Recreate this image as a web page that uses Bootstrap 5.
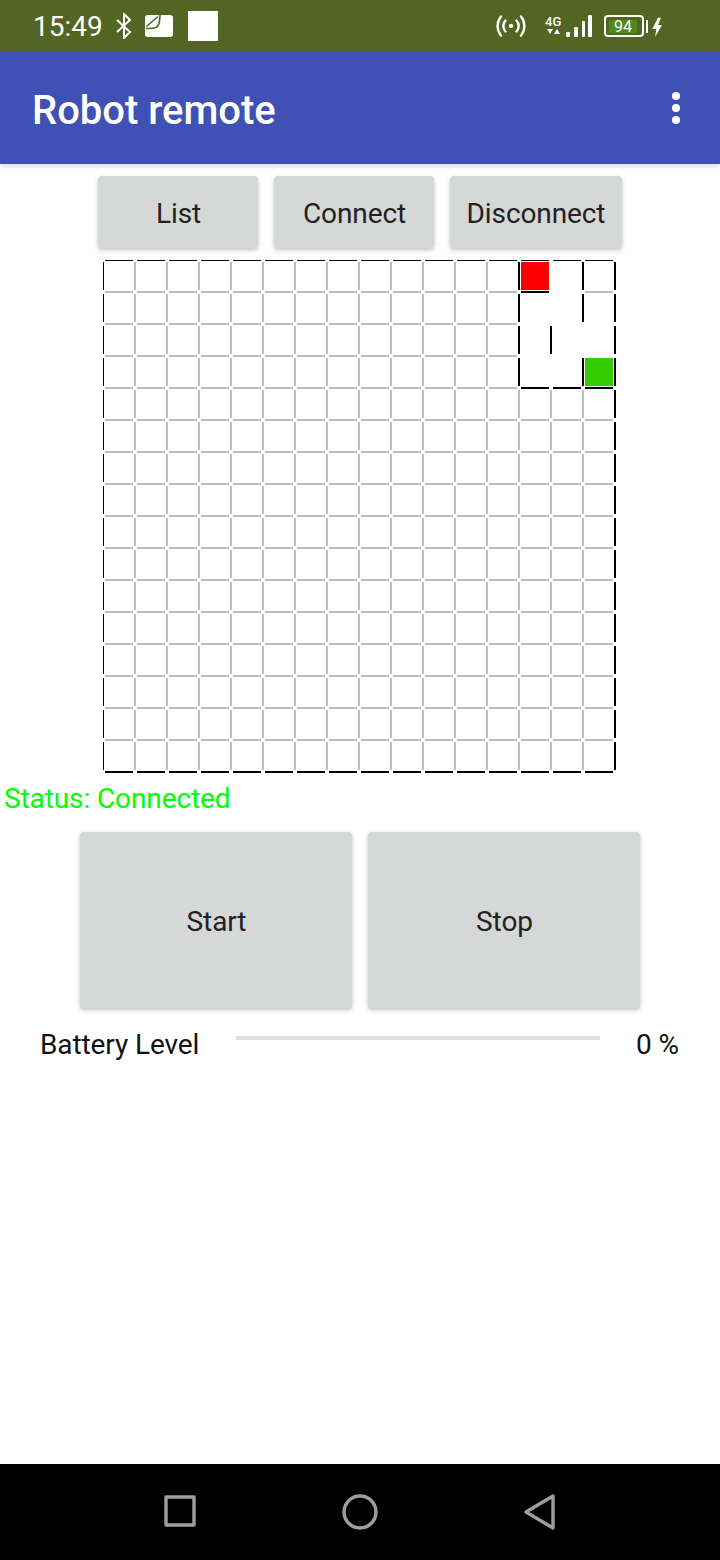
<!DOCTYPE html>
<html lang="en">
<head>
  <meta charset="UTF-8">
  <title>Robot remote</title>
  <meta name="viewport" content="width=device-width, initial-scale=1">
  <link href="https://cdn.jsdelivr.net/npm/bootstrap@5.3.2/dist/css/bootstrap.min.css" rel="stylesheet">
  <style>
    body { font-family: Roboto, "Liberation Sans", sans-serif; background: #fff; margin: 0; }
    .phone { width: 720px; height: 1560px; }
    .status-strip { height: 52px; background: #536523; color: #fff; padding-left: 33px; padding-right: 57px; }
    .clock { font-size: 28px; line-height: 52px; width: 83px; padding-top: 2px; }
    .sim-icon { margin-left: 13px; }
    .note-square { width: 30px; height: 30px; background: #fff; margin-left: 15px; }
    .net-box { margin-left: 19px; margin-right: 5px; width: 16px; }
    .net-label { font-size: 13px; line-height: 12px; font-weight: 500; text-align: center; }
    .batt { width: 40px; height: 22px; border: 2px solid #fff; border-radius: 4px; padding: 3px 5px 2px 3px; margin-left: 12px; }
    .batt-fill { background: #4c8a1e; font-size: 16px; line-height: 13px; text-align: center; height: 13px; }
    .app-bar { height: 112px; background: #3f51b5; color: #fff; padding-left: 32px; padding-right: 40px; box-shadow: 0 2px 5px rgba(0,0,0,.15); }
    .app-title { font-size: 40px; font-weight: 500; padding-top: 5px; }
    .dots i { display: block; width: 8px; height: 8px; background: #fff; border-radius: 50%; margin: 4px 0; }
    .action-btn { background: #d6d7d7; border: 0; border-radius: 4px; color: #222; font-size: 28px; line-height: 32px; padding: 3px 0 0 1px;
      letter-spacing: -.1px; box-shadow: 0 2px 4px rgba(0,0,0,.25); }
    .action-btn:hover { background: #d6d7d7; color: #222; }
    .top-row { padding-top: 12px; height: 84px; }
    .top-row .action-btn { height: 72px; width: 160px; }
    .top-row .wide-btn { width: 172px; padding-left: 0; }
    .maze-wrap { height: 514px; margin-top: 12px; margin-bottom: 0; }
    .state-text { color: #00ff00; font-size: 28px; line-height: 32px; padding-left: 4px; margin-top: 9px; letter-spacing: -.1px; }
    .big-row { margin-top: 17px; }
    .big-row .action-btn { width: 272px; height: 176px; }
    .batt-row { padding: 20px 41px 0 40px; font-size: 28px; line-height: 34px; color: #111; letter-spacing: -.1px; }
    .batt-name { width: 196px; }
    .batt-track { width: 364px; height: 4px; background: #e0e0e0; margin-top: -15px; }
    .batt-value { width: 79px; text-align: right; }
    .nav-strip { height: 96px; background: #000; }
  </style>
</head>
<body>
  <div class="phone d-flex flex-column overflow-hidden">

    <!-- status bar -->
    <div class="status-strip d-flex align-items-center flex-shrink-0">
      <div class="clock">15:49</div>
      <svg width="16" height="26" viewBox="0 0 16 26" fill="none" stroke="#fff" stroke-width="2"><path d="M1 7l13 12-6 6V1l6 6L1 19"/></svg>
      <svg class="sim-icon" width="28" height="22" viewBox="0 0 28 22"><rect width="28" height="22" rx="3" fill="#fff"/><path fill="none" stroke="#536523" stroke-width="1.6" d="M1.500 11.500L13 1.500M15 0c0 7-2 11.500-4 12.500-2 .7-5 1-10 1"/></svg>
      <div class="note-square"></div>
      <div class="flex-grow-1"></div>
      <svg width="30" height="24" viewBox="0 0 30 24" fill="none" stroke="#fff" stroke-width="2.4" stroke-linecap="round"><circle cx="15" cy="12" r="2.2" fill="#fff" stroke="none"/><path d="M9.5 6.5a8 8 0 0 0 0 11M20.5 6.500a8 8 0 0 1 0 11M5 2.500a15 15 0 0 0 0 19M25 2.500a15 15 0 0 1 0 19"/></svg>
      <div class="net-box">
        <div class="net-label">4G</div>
        <svg class="d-block" width="16" height="8" viewBox="0 0 16 8"><path fill="#fff" d="M2 1h6L5 6zM9 6h6l-3-5z"/></svg>
      </div>
      <svg width="26" height="24" viewBox="0 0 26 24" fill="#fff"><rect x="0" y="18" width="4" height="5" rx="1"/><rect x="8" y="13" width="4" height="10" rx="1"/><rect x="16" y="7" width="3" height="16" rx="1"/><rect x="22" y="1" width="4" height="22" rx="1"/></svg>
      <div class="batt flex-shrink-0"><div class="batt-fill">94</div></div>
      <svg width="19" height="22" viewBox="0 0 19 22" fill="#fff"><rect x="2" y="5" width="2" height="13"/><path d="M14 2.700h3L14 10h4L11 22l1.300-8H8.300z"/></svg>
    </div>

    <!-- app bar -->
    <div class="app-bar d-flex align-items-center justify-content-between flex-shrink-0">
      <div class="app-title">Robot remote</div>
      <div class="dots"><i></i><i></i><i></i></div>
    </div>

    <!-- list / connect / disconnect -->
    <div class="top-row d-flex justify-content-center gap-3 flex-shrink-0">
      <button class="btn action-btn">List</button>
      <button class="btn action-btn">Connect</button>
      <button class="btn action-btn wide-btn">Disconnect</button>
    </div>

    <!-- maze -->
    <div class="maze-wrap d-flex justify-content-center flex-shrink-0">
      <svg id="maze" width="514" height="514" viewBox="0 0 514 514"></svg>
    </div>

    <div class="state-text">Status: Connected</div>

    <div class="big-row d-flex justify-content-center gap-3 flex-shrink-0">
      <button class="btn action-btn">Start</button>
      <button class="btn action-btn">Stop</button>
    </div>

    <div class="batt-row d-flex align-items-center flex-shrink-0">
      <div class="batt-name">Battery Level</div>
      <div class="batt-track"></div>
      <div class="batt-value">0 %</div>
    </div>

    <div class="flex-grow-1"></div>

    <!-- navigation bar -->
    <div class="nav-strip d-flex align-items-center justify-content-center flex-shrink-0">
      <svg width="440" height="96" viewBox="0 0 440 96" fill="none" stroke="#9e9e9e" stroke-width="3.4" stroke-linejoin="round">
        <rect x="26" y="33" width="28" height="28"/>
        <circle cx="220" cy="48" r="16"/>
        <path d="M386 48l27-16v32z"/>
      </svg>
    </div>
  </div>

  <script src="https://cdn.jsdelivr.net/npm/bootstrap@5.3.2/dist/js/bootstrap.bundle.min.js"></script>
  <script>
    const BLACK = "#000", GREY = "#bdbdbd", NONE = null;

    // overrides for explored cells: "boundary,index" -> colour
    const vWalls = { "13,0": BLACK, "13,1": BLACK, "13,2": BLACK, "13,3": BLACK,
                     "14,0": NONE, "14,1": NONE, "14,2": BLACK, "14,3": NONE,
                     "15,0": BLACK, "15,1": BLACK, "15,2": NONE, "15,3": BLACK };
    const hWalls = { "1,13": BLACK, "1,14": NONE,
                     "2,13": NONE, "2,14": NONE, "2,15": NONE,
                     "3,13": NONE, "3,14": NONE, "3,15": NONE,
                     "4,13": BLACK, "4,14": BLACK, "4,15": BLACK };

    let out = "";
    const rect = (x, y, w, h, fill) => {
      out += `<rect x="${x}" y="${y}" width="${w}" height="${h}" fill="${fill}"/>`;
    };

    for (let k = 0; k <= 16; k++) {
      for (let i = 0; i < 16; i++) {
        let v = (k === 0 || k === 16) ? BLACK : GREY;
        if (`${k},${i}` in vWalls) v = vWalls[`${k},${i}`];
        if (v) rect(32 * k - 1, 2 + 32 * i, 2, 28, v);

        let h = (k === 0 || k === 16) ? BLACK : GREY;
        if (`${k},${i}` in hWalls) h = hWalls[`${k},${i}`];
        if (h) rect(2 + 32 * i, 32 * k - 1, 28, 2, h);
      }
    }

    rect(418, 2, 28, 28, "#ff0000");  // robot
    rect(482, 98, 28, 28, "#33cc00"); // goal
    document.getElementById("maze").innerHTML = out;
  </script>
</body>
</html>
